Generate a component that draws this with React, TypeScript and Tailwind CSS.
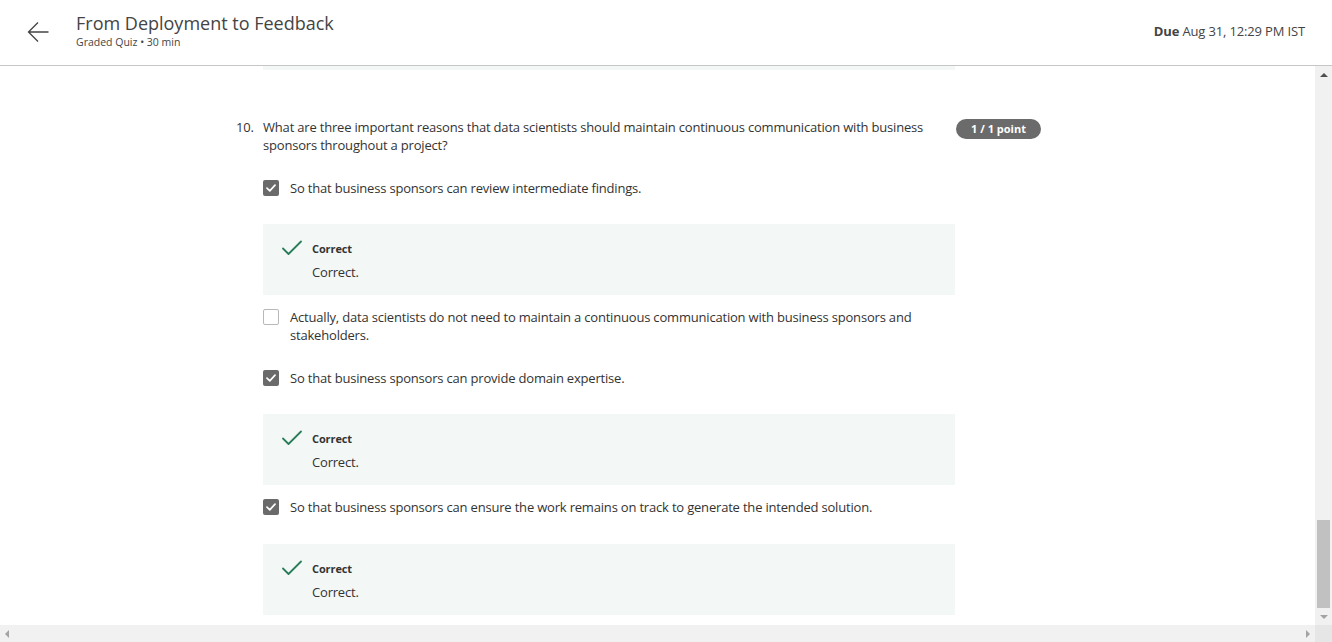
import React from "react";

const Check = () => (
  <svg width="10" height="8" viewBox="0 0 10 8" fill="none">
    <path d="M1 4.2 L3.8 6.8 L9 1.2" stroke="white" strokeWidth="1.7" strokeLinecap="round" strokeLinejoin="round" />
  </svg>
);

const Box = ({ checked }: { checked: boolean }) =>
  checked ? (
    <div className="w-4 h-4 rounded-[2px] bg-[#6a6a6a] flex items-center justify-center shrink-0 mt-[1px]">
      <Check />
    </div>
  ) : (
    <div className="w-4 h-4 rounded-[2px] border-[1.5px] border-[#b8b8b8] bg-white shrink-0 mt-[1px]" />
  );

const Option = ({ checked, text, mt }: { checked: boolean; text: string; mt: string }) => (
  <div className={`flex items-start gap-[11px] ${mt}`}>
    <Box checked={checked} />
    <div className="text-[13px] leading-[18px] tracking-[-0.19px] text-[#333] w-[665px]">{text}</div>
  </div>
);

const Feedback = ({ mt }: { mt: string }) => (
  <div className={`bg-[#f3f8f6] h-[71px] pl-[19px] pt-[17px] flex ${mt}`}>
    <svg width="20" height="16" viewBox="0 0 20 16" fill="none" className="mt-[-1px]">
      <path d="M1 8.5 L6.5 14 L19 1.5" stroke="#2a7d5a" strokeWidth="1.8" strokeLinecap="round" strokeLinejoin="round" />
    </svg>
    <div className="ml-[10px]">
      <div className="text-[11px] leading-[16px] font-bold text-[#333] tracking-[-0.1px]">Correct</div>
      <div className="text-[13px] leading-[18px] text-[#333] mt-[6px] tracking-[-0.19px]">Correct.</div>
    </div>
  </div>
);

export default function App() {
  return (
    <div className="w-[1332px] h-[642px] overflow-hidden bg-white flex flex-col" style={{ fontFamily: "'Open Sans', sans-serif" }}>
      <header className="h-[66px] border-b border-[#c6c6c6] flex items-center pl-[27px] pr-[27px] shrink-0">
        <svg width="22" height="22" viewBox="0 0 22 22" fill="none" className="mt-[-1px]">
          <path d="M1.5 11 H21.5 M11 1.5 L1.5 11 L11 20.5" stroke="#444" strokeWidth="1.3" />
        </svg>
        <div className="ml-[27px] flex flex-col mt-[-6px]">
          <div className="text-[18px] leading-[24px] text-[#444]">From Deployment to Feedback</div>
          <div className="text-[10.5px] leading-[14px] text-[#444]">Graded Quiz • 30 min</div>
        </div>
        <div className="ml-auto text-[13px] text-[#444] mt-[-2px] tracking-[-0.15px]">
          <span className="font-bold">Due</span> Aug 31, 12:29 PM IST
        </div>
      </header>
      <div className="flex flex-1 min-h-0">
        <div className="flex-1 flex flex-col">
          <div className="flex-1 min-h-0 overflow-hidden">
            <div className="ml-[263px] w-[692px] h-[4px] bg-[#f3f8f6]" />
            <div className="flex pl-[236px] mt-[48px]">
              <div className="w-[27px] text-[13px] leading-[18px] text-[#333] tracking-[-0.19px]">10.</div>
              <div className="w-[692px]">
                <div className="text-[13px] leading-[18px] text-[#333] tracking-[-0.19px]">
                  What are three important reasons that data scientists should maintain continuous communication with business sponsors throughout a project?
                </div>
                <Option mt="mt-[25px]" checked text="So that business sponsors can review intermediate findings." />
                <Feedback mt="mt-[27px]" />
                <Option mt="mt-[13px]" checked={false} text="Actually, data scientists do not need to maintain a continuous communication with business sponsors and stakeholders." />
                <Option mt="mt-[25px]" checked text="So that business sponsors can provide domain expertise." />
                <Feedback mt="mt-[27px]" />
                <Option mt="mt-[13px]" checked text="So that business sponsors can ensure the work remains on track to generate the intended solution." />
                <Feedback mt="mt-[28px]" />
              </div>
              <div className="ml-[1px] mt-[1px] h-[20px] w-[85px] rounded-full bg-[#6b6b6b] text-white text-[11px] font-bold flex items-center justify-center">
                1 / 1 point
              </div>
            </div>
          </div>
          <div className="h-[17px] bg-[#f1f1f1] flex items-center justify-between px-[5px] shrink-0">
            <div className="w-0 h-0 border-y-[4px] border-y-transparent border-r-[4px] border-r-[#a3a3a3]" />
            <div className="w-0 h-0 border-y-[4px] border-y-transparent border-l-[4px] border-l-[#a3a3a3]" />
          </div>
        </div>
        <div className="w-[17px] bg-[#f1f1f1] flex flex-col items-center shrink-0">
          <div className="h-[17px] flex items-center justify-center">
            <div className="w-0 h-0 border-x-[4px] border-x-transparent border-b-[4px] border-b-[#505050]" />
          </div>
          <div className="flex-1 w-full flex flex-col justify-end px-[2px]">
            <div className="h-[88px] bg-[#c1c1c1]" />
          </div>
          <div className="h-[17px] flex items-center justify-center">
            <div className="w-0 h-0 border-x-[4px] border-x-transparent border-t-[4px] border-t-[#a3a3a3]" />
          </div>
          <div className="h-[17px] w-full bg-[#e6e6e6]" />
        </div>
      </div>
    </div>
  );
}
